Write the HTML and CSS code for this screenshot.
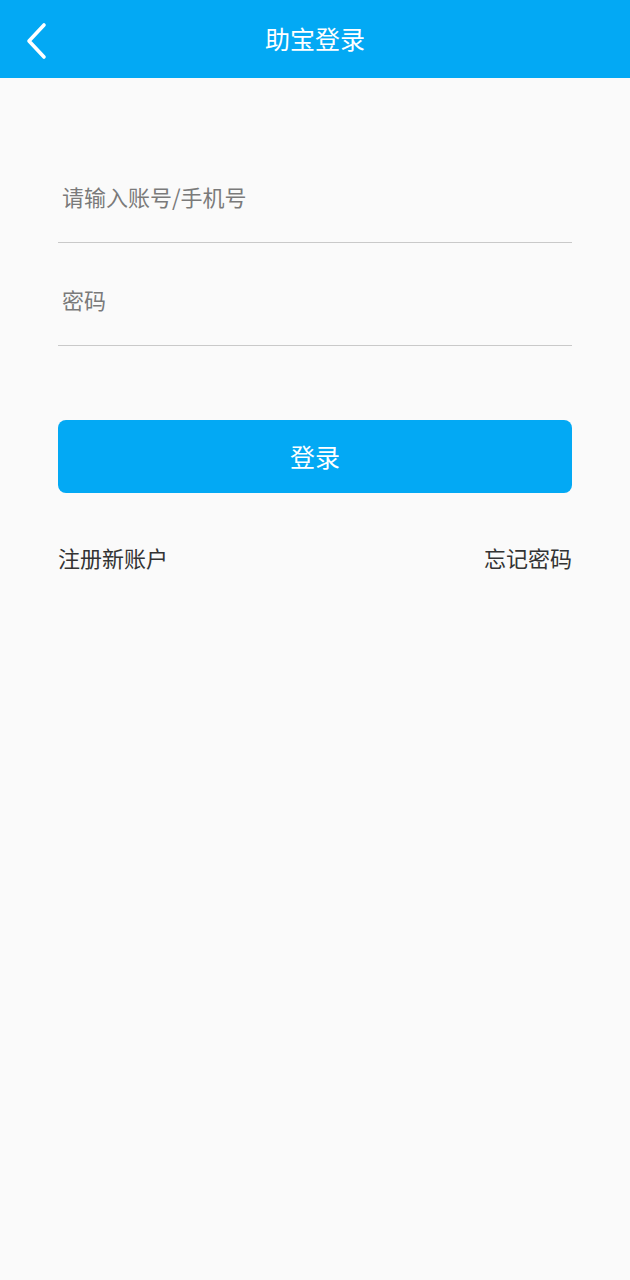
FILE: index.html
```html
<!DOCTYPE html>
<html lang="zh-CN">
<head>
<meta charset="utf-8">
<title>助宝登录</title>
<link rel="stylesheet" href="styles.css">
</head>
<body>
<header class="topbar">
  <span class="back">
    <svg width="24" height="40" viewBox="0 0 24 40"><path d="M19 4 L4 20 L19 36" fill="none" stroke="#fff" stroke-width="3.6" stroke-linecap="round" stroke-linejoin="round"/></svg>
  </span>
  <h1 class="title">助宝登录</h1>
</header>
<main class="form">
  <div class="field"><span class="placeholder">请输入账号/手机号</span></div>
  <div class="field"><span class="placeholder">密码</span></div>
  <button class="login">登录</button>
  <div class="links">
    <span>注册新账户</span>
    <span>忘记密码</span>
  </div>
</main>
</body>
</html>
```
FILE: styles.css
```css
html, body {
  margin: 0;
  padding: 0;
  background: #fafafa;
  font-family: "Noto Sans CJK SC", "Noto Sans", sans-serif;
}
.topbar {
  position: relative;
  height: 78px;
  background: #03a9f4;
  display: flex;
  align-items: center;
  justify-content: center;
}
.back {
  position: absolute;
  left: 25px;
  top: 21px;
  width: 24px;
  height: 40px;
  display: block;
}
.back svg { display: block; }
.title {
  margin: 0 0 2px;
  font-size: 25px;
  font-weight: 400;
  color: #fff;
  line-height: 30px;
}
.form {
  padding: 62px 58px 0;
}
.field {
  height: 102px;
  box-sizing: content-box;
  border-bottom: 1.5px solid #c9c9c9;
  padding: 0 4px;
  display: flex;
  align-items: flex-end;
}
.placeholder {
  display: block;
  font-size: 22px;
  line-height: 30px;
  color: #7a7a7a;
  margin-bottom: 31px;
}
.login {
  display: block;
  width: 100%;
  height: 73px;
  margin-top: 74px;
  border: none;
  border-radius: 8px;
  background: #03a9f4;
  color: #fff;
  font-family: inherit;
  font-size: 25px;
  line-height: 30px;
  padding: 0 0 2px;
}
.links {
  margin-top: 49px;
  display: flex;
  justify-content: space-between;
  font-size: 22px;
  line-height: 30px;
  color: #333;
}
```
